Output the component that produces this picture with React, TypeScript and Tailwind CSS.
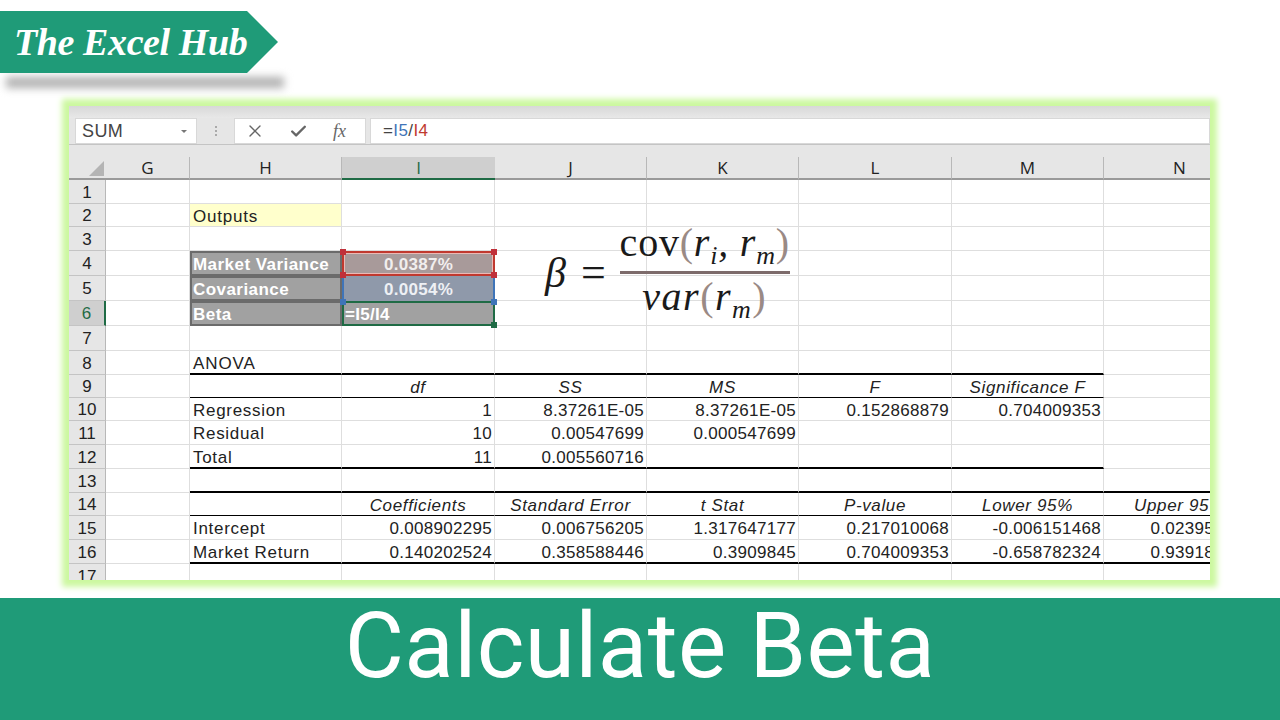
import React from "react";
import { X, Check } from "lucide-react";

// ─── SHEET DATA ───────────────────────────────────────────────────────────────

const COLS = ["G", "H", "I", "J", "K", "L", "M", "N"];
const ROWS = Array.from({ length: 17 }, (_, i) => i + 1);

const ITALIC: Record<string, string[]> = {
  "9": ["", "", "df", "SS", "MS", "F", "Significance F", ""],
  "14": ["", "", "Coefficients", "Standard Error", "t Stat", "P-value", "Lower 95%", "Upper 95%"],
};

const VALUES: Record<string, string[]> = {
  "10": ["", "Regression", "1", "8.37261E-05", "8.37261E-05", "0.152868879", "0.704009353", ""],
  "11": ["", "Residual", "10", "0.00547699", "0.000547699", "", "", ""],
  "12": ["", "Total", "11", "0.005560716", "", "", "", ""],
  "15": ["", "Intercept", "0.008902295", "0.006756205", "1.317647177", "0.217010068", "-0.006151468", "0.023953122"],
  "16": ["", "Market Return", "0.140202524", "0.358588446", "0.3909845", "0.704009353", "-0.658782324", "0.939187372"],
};

function edgeClass(row: number, col: number) {
  // col 1..6 = H..M, col 7 = N; the second table runs on into N
  const inFirst = col >= 1 && col <= 6;
  const inSecond = col >= 1;
  if (row === 8 && inFirst) return "border-b-2 border-b-black";
  if (row === 9 && inFirst) return "border-b border-b-black";
  if (row === 12 && inFirst) return "border-b-2 border-b-black";
  if (row === 13 && inSecond) return "border-b-2 border-b-black";
  if (row === 14 && inSecond) return "border-b border-b-black";
  if (row === 16 && inSecond) return "border-b-2 border-b-black";
  return "border-b border-b-[#dedede]";
}

function Handle({ className }: { className: string }) {
  return <span className={`absolute h-[6px] w-[6px] ${className}`} />;
}

function Cell({ row, col }: { row: number; col: number }) {
  const base = "flex items-center overflow-hidden whitespace-nowrap border-r border-r-[#dedede] pt-[2px] text-[17px] leading-none text-[#222]";
  const key = String(row);

  if (row === 2 && col === 1) {
    return <div className={`${base} border-b border-b-[#dedede] bg-[#ffffcc] pl-[3px] tracking-[0.8px]`}>Outputs</div>;
  }

  if (col === 1 && row >= 4 && row <= 6) {
    const label = row === 4 ? "Market Variance" : row === 5 ? "Covariance" : "Beta";
    return (
      <div className="flex items-center border-[2px] border-[#6b6b6b] bg-[#a1a1a1] pt-[2px] pl-[1px] text-[17px] leading-none font-bold tracking-[0.45px] text-white">
        {label}
      </div>
    );
  }

  if (col === 2 && row === 4) {
    return (
      <div className="relative z-10 flex items-center justify-center border-[2px] border-[#c0392f] bg-[#a89a9a] pt-[2px] text-[17px] leading-none font-bold tracking-[0.3px] text-[#f1eeee] shadow-[inset_0_0_0_1px_#eab9b5]">
        0.0387%
        <Handle className="-top-[4px] -left-[4px] bg-[#c0303a]" />
        <Handle className="-top-[4px] -right-[4px] bg-[#c0303a]" />
        <Handle className="-bottom-[4px] -left-[4px] bg-[#c0303a]" />
        <Handle className="-bottom-[4px] -right-[4px] bg-[#c0303a]" />
      </div>
    );
  }

  if (col === 2 && row === 5) {
    return (
      <div className="relative flex items-center justify-center border-x-[2px] border-[#3f74b8] bg-[#8f99aa] pt-[2px] text-[17px] leading-none font-bold tracking-[0.3px] text-[#eef0f4]">
        0.0054%
        <Handle className="-bottom-[4px] -left-[4px] z-20 bg-[#3f74b8]" />
        <Handle className="-bottom-[4px] -right-[4px] z-20 bg-[#3f74b8]" />
      </div>
    );
  }

  if (col === 2 && row === 6) {
    return (
      <div className="relative z-10 flex items-center border-[2px] border-[#1f6b45] bg-[#a1a1a1] pt-[2px] pl-[1px] text-[17px] leading-none font-bold tracking-[0.3px] text-white">
        =I5/I4
        <Handle className="-right-[4px] -bottom-[4px] bg-[#1f6b45]" />
      </div>
    );
  }

  if (row === 8 && col === 1) {
    return <div className={`${base} ${edgeClass(row, col)} pl-[3px] tracking-[0.9px]`}>ANOVA</div>;
  }

  if (ITALIC[key]) {
    return (
      <div className={`${base} ${edgeClass(row, col)} justify-center tracking-[0.65px] italic`}>
        {ITALIC[key][col]}
      </div>
    );
  }

  if (VALUES[key]) {
    const text = VALUES[key][col];
    if (col === 1) {
      return <div className={`${base} ${edgeClass(row, col)} pl-[3px] tracking-[0.7px]`}>{text}</div>;
    }
    return (
      <div className={`${base} ${edgeClass(row, col)} justify-end pr-[2px] tracking-[0.3px]`}>
        {text}
      </div>
    );
  }

  return <div className={`${base} ${edgeClass(row, col)}`} />;
}

function FormulaBar() {
  return (
    <div className="flex h-[51px] flex-col bg-[#e6e6e6]">
      <div className="h-[12px] bg-gradient-to-b from-[#d8d8d8] to-[#e8e8e8]" />
      <div className="flex h-[27px] items-stretch border-b border-[#c4c4c4] pl-[6px]">
        <div className="flex w-[122px] items-center justify-between border border-[#d8d8d8] bg-white pr-[9px] pl-[6px] text-[18px] tracking-[0.4px] text-[#444]">
          SUM
          <span className="h-0 w-0 border-x-[3px] border-t-[3px] border-x-transparent border-t-[#777]" />
        </div>
        <div className="flex w-[37px] flex-col items-center justify-center gap-[2px]">
          <span className="h-[2px] w-[2px] bg-[#aaa]" />
          <span className="h-[2px] w-[2px] bg-[#aaa]" />
          <span className="h-[2px] w-[2px] bg-[#aaa]" />
        </div>
        <div className="flex w-[132px] items-center border border-[#d8d8d8] bg-white pl-[10px] text-[#666]">
          <X size={20} strokeWidth={1.6} />
          <Check size={19} strokeWidth={3} className="ml-[24px]" />
          <span className="ml-[25px] font-['Liberation_Serif',serif] text-[18px] italic">fx</span>
        </div>
        <div className="ml-[4px] flex flex-1 items-center border border-[#d8d8d8] bg-white pl-[12px] text-[17px] tracking-[0.4px] text-[#444]">
          =<span className="text-[#3f74b8]">I5</span>/<span className="text-[#c0392f]">I4</span>
        </div>
      </div>
    </div>
  );
}

function BetaFormula() {
  return (
    <div className="absolute top-[64px] left-[476px] flex items-center font-['Liberation_Serif',serif] text-[#1a1a1a]">
      <span className="text-[42px] leading-none italic">β</span>
      <span className="ml-[15px] text-[44px] leading-none">=</span>
      <div className="ml-[14px] flex w-[170px] flex-col items-center">
        <div className="h-[50px] text-[40px] leading-[44px] tracking-[0.8px] whitespace-nowrap">
          cov<span className="text-[#9a8a85]">(</span>
          <i>r</i>
          <i className="align-[-8px] text-[26px] leading-none">i</i>
          <i>, r</i>
          <i className="align-[-8px] text-[26px] leading-none">m</i>
          <span className="text-[#9a8a85]">)</span>
        </div>
        <div className="h-[3px] w-full bg-[#7d6b6b]" />
        <div className="h-[50px] text-[40px] leading-[46px] tracking-[1.5px] whitespace-nowrap">
          <i>var</i>
          <span className="text-[#9a8a85]">(</span>
          <i>r</i>
          <i className="align-[-8px] text-[26px] leading-none">m</i>
          <span className="text-[#9a8a85]">)</span>
        </div>
      </div>
    </div>
  );
}

function Sheet() {
  return (
    <div className="relative grid grid-cols-[37px_84px_152px_153px_152px_152px_153px_152px_152px] grid-rows-[23px_24px_23px_24px_25px_25px_25px_25px_24px_23px_23px_24px_24px_24px_23px_24px_24px_24px]">
      {/* column headers */}
      <div className="relative border-b-2 border-b-[#9a9a9a] bg-[#e6e6e6]">
        <span className="absolute right-[2px] bottom-[2px] h-0 w-0 border-b-[15px] border-l-[15px] border-b-[#b4b4b4] border-l-transparent" />
      </div>
      {COLS.map((c) => (
        <div
          key={c}
          className={
            c === "I"
              ? "flex items-center justify-center border-b-2 border-b-[#1f6b45] bg-[#cfcfcf] font-['Open_Sans',sans-serif] text-[17px] text-[#1f6b45]"
              : "flex items-center justify-center border-r border-b-2 border-r-[#b8b8b8] border-b-[#9a9a9a] bg-[#e6e6e6] font-['Open_Sans',sans-serif] text-[17px] text-[#222]"
          }
        >
          {c}
        </div>
      ))}

      {ROWS.map((row) => (
        <React.Fragment key={row}>
          <div
            className={
              row === 6
                ? "flex items-center justify-center border-r-2 border-b border-r-[#1f6b45] border-b-[#c4c4c4] bg-[#cfcfcf] pt-[2px] text-[17px] text-[#1f6b45]"
                : "flex items-center justify-center border-r border-b border-r-[#b8b8b8] border-b-[#c4c4c4] bg-[#e6e6e6] pt-[2px] text-[17px] text-[#222]"
            }
          >
            {row}
          </div>
          {COLS.map((c, col) => (
            <Cell key={c} row={row} col={col} />
          ))}
        </React.Fragment>
      ))}

      <BetaFormula />
    </div>
  );
}

export default function App() {
  return (
    <div className="flex h-[720px] w-[1280px] flex-col overflow-hidden bg-white font-['Liberation_Sans',Arial,sans-serif]">
      {/* ── Logo ribbon ───────────────────────────────────────────────────── */}
      <div className="relative mt-[11px] mb-[33px] h-[62px] w-[278px]">
        <div className="absolute top-[66px] left-[6px] h-[11px] w-[278px] bg-[#b0b0b0] blur-[4px]" />
        <div className="absolute inset-0 flex items-center bg-[#1f9b78] pl-[14px] [clip-path:polygon(0_0,247px_0,278px_31px,247px_62px,0_62px)]">
          <span className="font-['Liberation_Serif',serif] text-[38px] leading-none font-bold tracking-[-0.4px] text-white italic">
            The Excel Hub
          </span>
        </div>
      </div>

      {/* ── Spreadsheet window ────────────────────────────────────────────── */}
      <div className="ml-[69px] h-[474px] w-[1141px] overflow-hidden bg-white shadow-[0_0_6px_7px_#ccf89f]">
        <FormulaBar />
        <Sheet />
      </div>

      {/* ── Title band ────────────────────────────────────────────────────── */}
      <div className="mt-[18px] flex h-[122px] items-center justify-center bg-[#1f9b78] pb-[26px] font-['Roboto',sans-serif] text-[91px] leading-none tracking-[0.4px] text-white">
        Calculate Beta
      </div>
    </div>
  );
}
